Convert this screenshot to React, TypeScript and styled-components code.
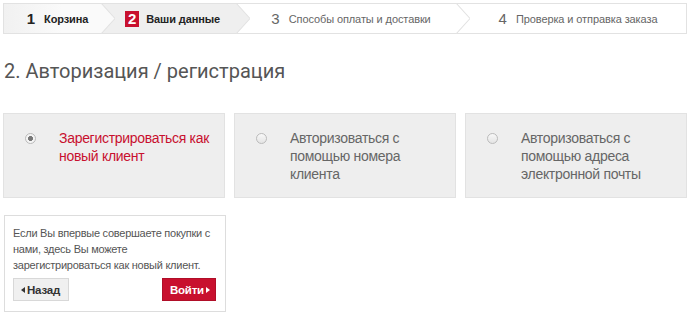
import React from "react";
import styled, { createGlobalStyle } from "styled-components";

const GlobalStyle = createGlobalStyle`
  html, body {
    margin: 0;
    padding: 0;
    background: #fff;
    font-family: "Liberation Sans", Arial, sans-serif;
  }
`;

const steps = [
  { num: "1", label: "Корзина", state: "done" },
  { num: "2", label: "Ваши данные", state: "active" },
  { num: "3", label: "Способы оплаты и доставки", state: "todo" },
  { num: "4", label: "Проверка и отправка заказа", state: "todo" },
];

const options = [
  { lines: ["Зарегистрироваться как", "новый клиент"], checked: true },
  { lines: ["Авторизоваться с", "помощью номера", "клиента"], checked: false },
  { lines: ["Авторизоваться с", "помощью адреса", "электронной почты"], checked: false },
];

export default function App() {
  return (
    <Page>
      <GlobalStyle />
      <StepBar>
        {steps.map((s, i) => (
          <Step key={s.num} $state={s.state} $last={i === steps.length - 1}>
            <StepNum $state={s.state}>{s.num}</StepNum>
            <StepLabel $state={s.state}>{s.label}</StepLabel>
            {i < steps.length - 1 && (
              <Chevron viewBox="0 0 14 30" preserveAspectRatio="none">
                <path
                  d="M0 0 L14 15 L0 30 Z"
                  fill={s.state === "done" ? "#fafafa" : s.state === "active" ? "#efefef" : "#fff"}
                />
                <path d="M0 0 L14 15 L0 30" fill="none" stroke="#e2e2e2" strokeWidth="1" />
              </Chevron>
            )}
          </Step>
        ))}
      </StepBar>

      <Title>2. Авторизация / регистрация</Title>

      <Options>
        {options.map((o) => (
          <OptionCard key={o.lines.join(" ")}>
            <Radio $checked={o.checked} />
            <OptionText $checked={o.checked}>
              {o.lines.map((l, i) => (
                <React.Fragment key={l}>
                  {i > 0 && <br />}
                  {l}
                </React.Fragment>
              ))}
            </OptionText>
          </OptionCard>
        ))}
      </Options>

      <InfoBox>
        <InfoText>
          Если Вы впервые совершаете покупки с нами, здесь Вы можете зарегистрироваться как новый клиент.
        </InfoText>
        <Buttons>
          <BackButton>
            <Arrow $dir="left" $color="#333" />
            Назад
          </BackButton>
          <SubmitButton>
            Войти
            <Arrow $dir="right" $color="#fff" />
          </SubmitButton>
        </Buttons>
      </InfoBox>
    </Page>
  );
}

const Page = styled.div`
  width: 690px;
  height: 315px;
  box-sizing: border-box;
  padding: 3px 3px 0 3px;
  overflow: hidden;
`;

const StepBar = styled.div`
  display: grid;
  grid-template-columns: 97px 135px 220px 1fr;
  height: 31px;
  box-sizing: border-box;
  border: 1px solid #e2e2e2;
  background: #fff;
`;

const Step = styled.div<{ $state: string; $last: boolean }>`
  position: relative;
  display: flex;
  align-items: center;
  justify-content: center;
  gap: 7px;
  padding-right: ${(p) => (p.$last ? "0" : "4px")};
  padding-left: 12px;
  background: ${(p) =>
    p.$state === "done"
      ? "linear-gradient(to right, #f1f1f1, #fafafa 60%)"
      : p.$state === "active"
      ? "#efefef"
      : "#fff"};
`;

const Chevron = styled.svg`
  position: absolute;
  top: -1px;
  right: -14px;
  width: 14px;
  height: 31px;
  z-index: 2;
`;

const StepNum = styled.span<{ $state: string }>`
  font-size: 15px;
  line-height: 16px;
  font-weight: ${(p) => (p.$state === "todo" ? "normal" : "bold")};
  color: ${(p) => (p.$state === "active" ? "#fff" : p.$state === "done" ? "#222" : "#666")};
  background: ${(p) => (p.$state === "active" ? "#c8102e" : "transparent")};
  padding: ${(p) => (p.$state === "active" ? "0 3px" : "0 2px")};
  height: 16px;
  display: inline-flex;
  align-items: center;
`;

const StepLabel = styled.span<{ $state: string }>`
  font-size: 11px;
  letter-spacing: -0.1px;
  font-weight: ${(p) => (p.$state === "todo" ? "normal" : "bold")};
  color: ${(p) => (p.$state === "todo" ? "#666" : "#222")};
  white-space: nowrap;
`;

const Title = styled.h1`
  margin: 25px 0 0 1px;
  font-family: Roboto, "Liberation Sans", sans-serif;
  font-weight: normal;
  font-size: 20px;
  line-height: 24px;
  color: #555;
`;

const Options = styled.div`
  display: grid;
  grid-template-columns: repeat(3, 1fr);
  gap: 9px;
  margin-top: 30px;
`;

const OptionCard = styled.div`
  display: flex;
  align-items: flex-start;
  height: 85px;
  box-sizing: border-box;
  padding: 15px 0 0 21px;
  background: #eee;
  border: 1px solid #e2e2e2;
`;

const Radio = styled.span<{ $checked: boolean }>`
  flex: none;
  width: 9px;
  height: 9px;
  margin-top: 4px;
  margin-right: 23px;
  border-radius: 50%;
  border: 1px solid #bbb;
  background: ${(p) =>
    p.$checked
      ? "radial-gradient(circle, #777 0 2.2px, #f4f4f4 2.8px)"
      : "linear-gradient(#f8f8f8, #e4e4e4)"};
`;

const OptionText = styled.span<{ $checked: boolean }>`
  font-size: 14px;
  line-height: 18px;
  letter-spacing: -0.3px;
  white-space: nowrap;
  color: ${(p) => (p.$checked ? "#c8102e" : "#666")};
`;

const InfoBox = styled.div`
  width: 222px;
  box-sizing: border-box;
  margin: 17px 0 0 1px;
  padding: 9px 4px 10px 8px;
  border: 1px solid #ddd;
  background: #fff;
`;

const InfoText = styled.p`
  margin: 0;
  font-size: 11px;
  line-height: 16px;
  letter-spacing: -0.25px;
  color: #555;
`;

const Buttons = styled.div`
  display: flex;
  justify-content: space-between;
  margin-top: 5px;
  padding: 0 5px 0 0;
`;

const BackButton = styled.button`
  display: inline-flex;
  align-items: center;
  gap: 2px;
  height: 23px;
  padding: 0 8px 0 7px;
  font-family: "Liberation Sans", Arial, sans-serif;
  font-size: 11.5px;
  font-weight: bold;
  letter-spacing: -0.2px;
  color: #333;
  background: #f0f0f0;
  border: 1px solid #d8d8d8;
`;

const SubmitButton = styled.button`
  display: inline-flex;
  align-items: center;
  gap: 2px;
  height: 23px;
  padding: 0 5px 0 7px;
  font-family: "Liberation Sans", Arial, sans-serif;
  font-size: 11.5px;
  font-weight: bold;
  letter-spacing: -0.2px;
  color: #fff;
  background: #c8102e;
  border: 1px solid #b00e28;
`;

const Arrow = styled.span<{ $dir: "left" | "right"; $color: string }>`
  width: 0;
  height: 0;
  border-top: 3.5px solid transparent;
  border-bottom: 3.5px solid transparent;
  ${(p) =>
    p.$dir === "left"
      ? `border-right: 4px solid ${p.$color};`
      : `border-left: 4px solid ${p.$color};`}
`;
